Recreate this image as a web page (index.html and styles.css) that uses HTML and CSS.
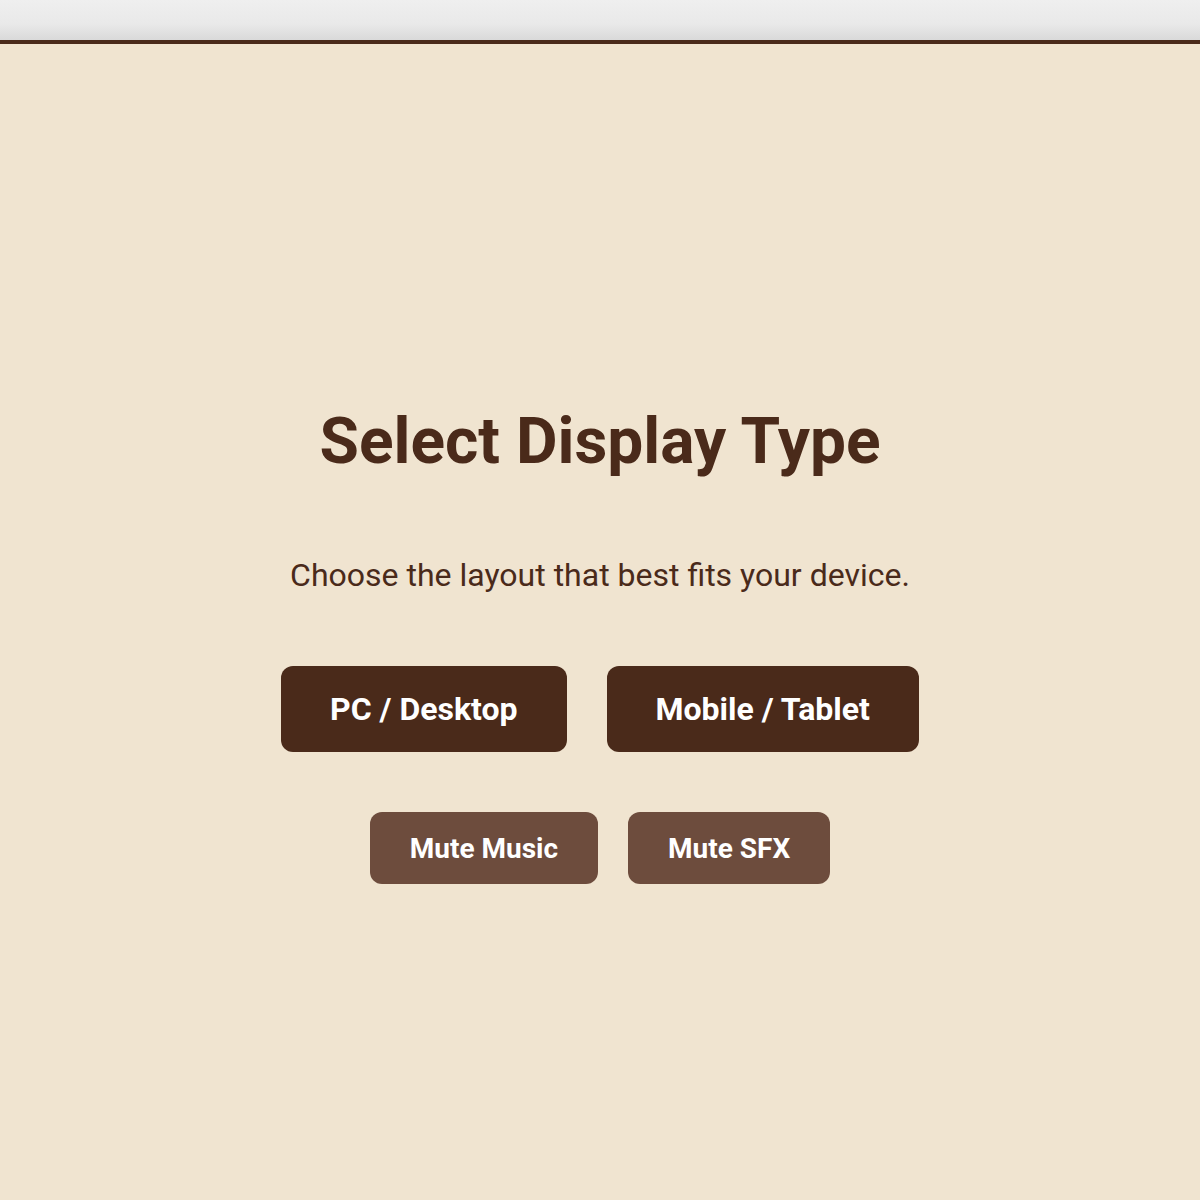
FILE: index.html
```html
<!DOCTYPE html>
<html>
<head>
<meta charset="utf-8">
<link rel="stylesheet" href="styles.css">
</head>
<body>
<div class="topbar"></div>
<main class="screen">
  <h1 class="title">Select Display Type</h1>
  <p class="subtitle">Choose the layout that best fits your device.</p>
  <div class="row row-main">
    <button class="btn btn-main">PC / Desktop</button>
    <button class="btn btn-main">Mobile / Tablet</button>
  </div>
  <div class="row row-small">
    <button class="btn btn-small">Mute Music</button>
    <button class="btn btn-small">Mute SFX</button>
  </div>
</main>
</body>
</html>
```
FILE: styles.css
```css
html, body {
  margin: 0;
  padding: 0;
  height: 100%;
}
body {
  background: #f0e4d0;
  font-family: Roboto, "Liberation Sans", sans-serif;
  color: #4a2a1a;
}
.topbar {
  height: 40px;
  background: linear-gradient(#efefef, #e9e9e9 60%, #d9d9d9);
  border-bottom: 4px solid #4a2a1a;
}
.screen {
  display: flex;
  flex-direction: column;
  align-items: center;
  padding-top: 358px;
}
.title {
  margin: 0;
  font-size: 64px;
  font-weight: 700;
  line-height: 80px;
}
.subtitle {
  margin: 73px 0 0;
  font-size: 32px;
  line-height: 40px;
}
.row {
  display: flex;
  justify-content: center;
}
.row-main {
  gap: 40px;
  margin-top: 71px;
}
.row-small {
  gap: 30px;
  margin-top: 60px;
}
.btn {
  border: none;
  font-family: Roboto, "Liberation Sans", sans-serif;
  font-weight: 700;
  color: #ffffff;
  border-radius: 12px;
}
.btn-main {
  background: #4a2a1a;
  font-size: 32px;
  height: 86px;
  padding: 0 49px;
}
.btn-small {
  background: #6d4c3d;
  font-size: 28px;
  height: 72px;
  padding: 0 40px;
}
```
